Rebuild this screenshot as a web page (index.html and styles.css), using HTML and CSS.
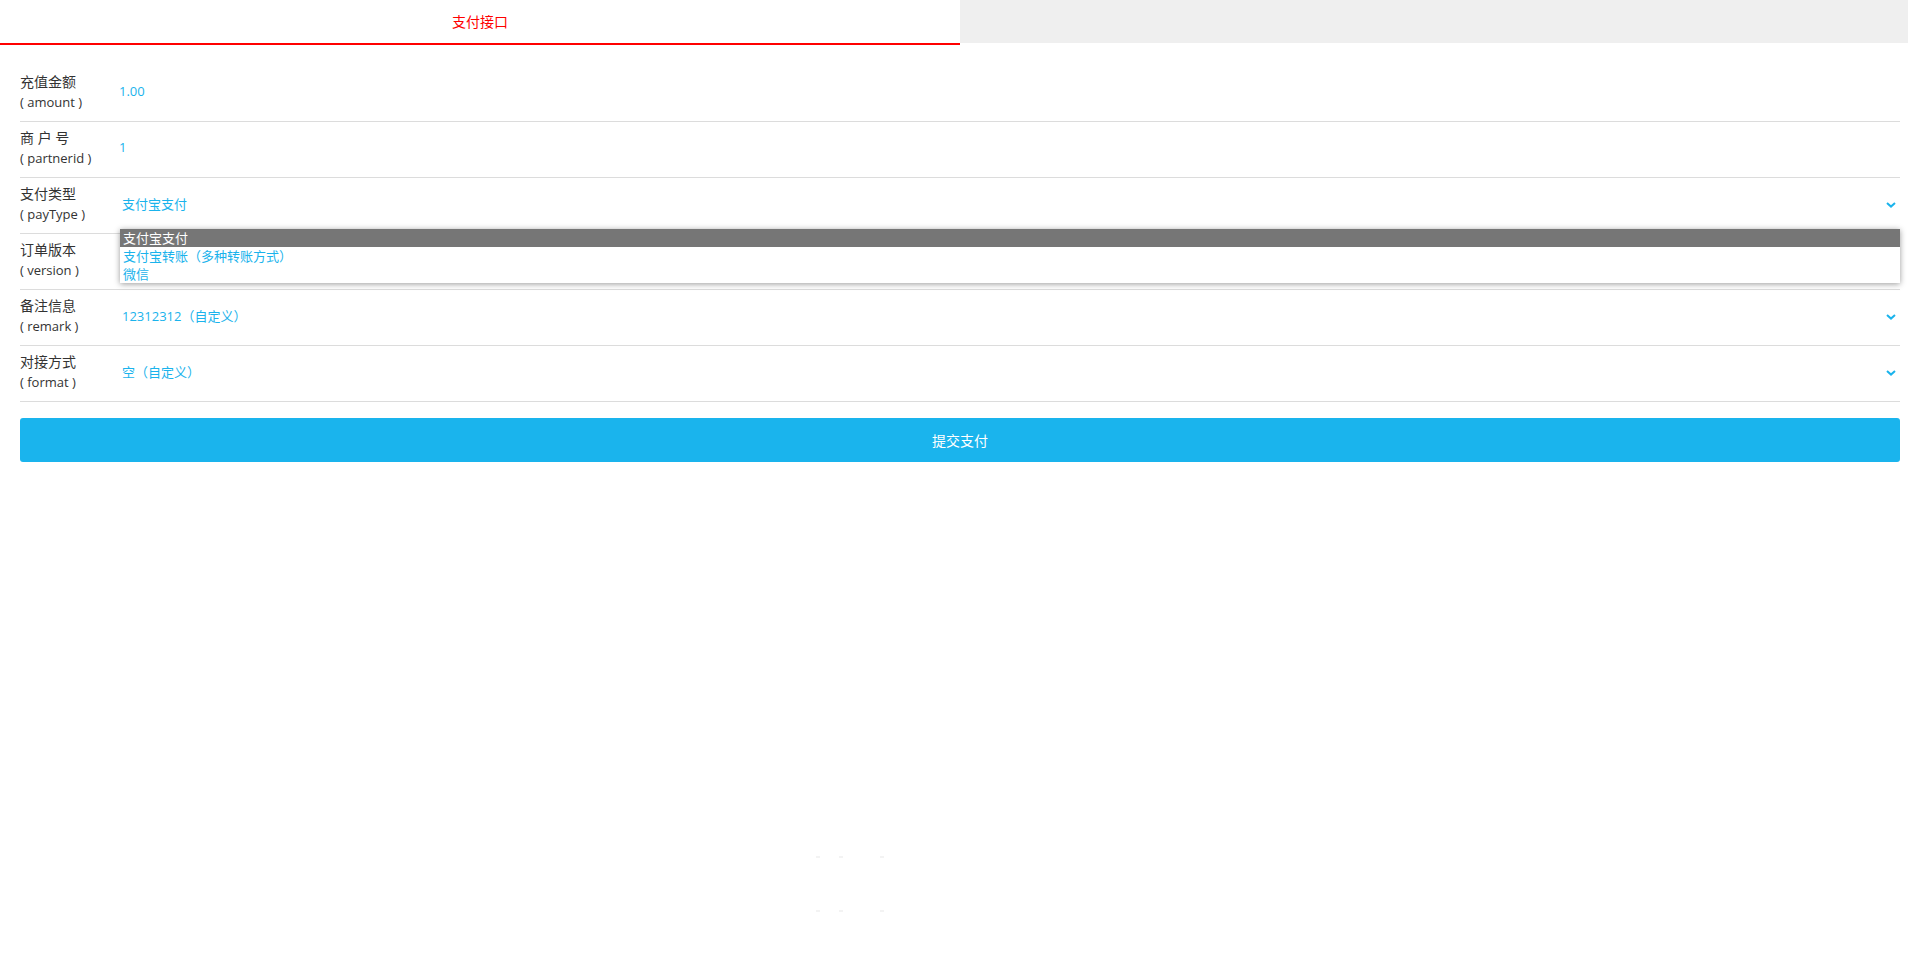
FILE: index.html
```html
<!DOCTYPE html>
<html lang="zh-CN">
<head>
<meta charset="utf-8">
<title>支付接口</title>
<link rel="stylesheet" href="styles.css">
</head>
<body>
<div class="tabs">
  <div class="tab active">支付接口</div>
  <div class="tab other"></div>
</div>
<form class="form">
  <div class="row">
    <div class="label"><span class="cn">充值金额</span><span class="en">( amount )</span></div>
    <div class="value input">1.00</div>
  </div>
  <div class="row">
    <div class="label"><span class="cn">商 户 号</span><span class="en">( partnerid )</span></div>
    <div class="value input">1</div>
  </div>
  <div class="row">
    <div class="label"><span class="cn">支付类型</span><span class="en">( payType )</span></div>
    <div class="value select">支付宝支付
      <svg class="chev" viewBox="0 0 10 6" width="10" height="6"><path d="M1 1 L5 4.6 L9 1" fill="none" stroke="#1ab3ec" stroke-width="2"/></svg>
    </div>
    <ul class="dropdown">
      <li class="sel">支付宝支付</li>
      <li>支付宝转账（多种转账方式）</li>
      <li>微信</li>
    </ul>
  </div>
  <div class="row">
    <div class="label"><span class="cn">订单版本</span><span class="en">( version )</span></div>
    <div class="value select">
      <svg class="chev" viewBox="0 0 10 6" width="10" height="6"><path d="M1 1 L5 4.6 L9 1" fill="none" stroke="#1ab3ec" stroke-width="2"/></svg>
    </div>
  </div>
  <div class="row">
    <div class="label"><span class="cn">备注信息</span><span class="en">( remark )</span></div>
    <div class="value select">12312312（自定义）
      <svg class="chev" viewBox="0 0 10 6" width="10" height="6"><path d="M1 1 L5 4.6 L9 1" fill="none" stroke="#1ab3ec" stroke-width="2"/></svg>
    </div>
  </div>
  <div class="row">
    <div class="label"><span class="cn">对接方式</span><span class="en">( format )</span></div>
    <div class="value select">空（自定义）
      <svg class="chev" viewBox="0 0 10 6" width="10" height="6"><path d="M1 1 L5 4.6 L9 1" fill="none" stroke="#1ab3ec" stroke-width="2"/></svg>
    </div>
  </div>
  <div class="actions">
    <button type="button" class="submit">提交支付</button>
  </div>
</form>
<div class="loader">
  <div class="dots"><i></i><i></i><i></i></div>
  <div class="dots"><i></i><i></i><i></i></div>
</div>
</body>
</html>
```
FILE: styles.css
```css
html, body {
  margin: 0;
  padding: 0;
  background: #fff;
}
body {
  font-family: "Open Sans", "Noto Sans CJK SC", sans-serif;
  color: #333;
  font-size: 14px;
}
.tabs {
  display: flex;
  align-items: flex-start;
  height: 45px;
}
.tab {
  display: flex;
  align-items: center;
  justify-content: center;
  font-size: 14px;
  box-sizing: border-box;
}
.tab.active {
  width: 960px;
  flex: none;
  height: 45px;
  background: #fff;
  color: #f00;
  border-bottom: 2px solid #f00;
  padding-bottom: 1px;
}
.tab.other {
  flex: 1;
  height: 43px;
  background: #efefef;
}
.form {
  margin: 0;
  padding: 21px 8px 0 20px;
}
.row {
  position: relative;
  display: flex;
  align-items: center;
  height: 55px;
  border-bottom: 1px solid #dcdcdc;
}
.label {
  width: 99px;
  flex: none;
  display: flex;
  flex-direction: column;
  align-items: flex-start;
  line-height: 20px;
  margin-top: -3px;
}
.label .cn {
  font-size: 14px;
  color: #333;
}
.label .en {
  font-size: 13px;
  color: #333;
}
.value {
  flex: 1;
  display: flex;
  align-items: center;
  font-size: 13px;
  color: #1ab3ec;
  margin-top: -6px;
  min-height: 18px;
}
.value.select {
  padding-left: 3px;
  margin-top: -4px;
}
.chev {
  margin-left: auto;
  margin-right: 4px;
  margin-top: 2px;
}
.dropdown {
  position: absolute;
  left: 100px;
  right: 0;
  top: 51px;
  margin: 0;
  padding: 0;
  list-style: none;
  background: #fff;
  box-shadow: 0 1px 6px rgba(0, 0, 0, 0.4);
  z-index: 5;
}
.dropdown li {
  height: 18px;
  line-height: 18px;
  font-size: 13px;
  padding-left: 3px;
  color: #1ab3ec;
}
.dropdown li.sel {
  background: #767676;
  color: #fff;
}
.actions {
  padding-top: 16px;
}
.submit {
  display: block;
  width: 100%;
  height: 44px;
  border: none;
  border-radius: 3px;
  background: #1ab4ed;
  color: #fff;
  font-family: "Open Sans", "Noto Sans CJK SC", sans-serif;
  font-size: 14px;
  cursor: pointer;
}
.loader {
  position: absolute;
  left: 816px;
  top: 856px;
  display: flex;
  flex-direction: column;
  gap: 52px;
}
.dots {
  display: flex;
  gap: 19px;
}
.dots i {
  display: block;
  width: 4px;
  height: 2px;
  background: #f3f3f3;
}
.dots i:last-child {
  margin-left: 18px;
}
```
